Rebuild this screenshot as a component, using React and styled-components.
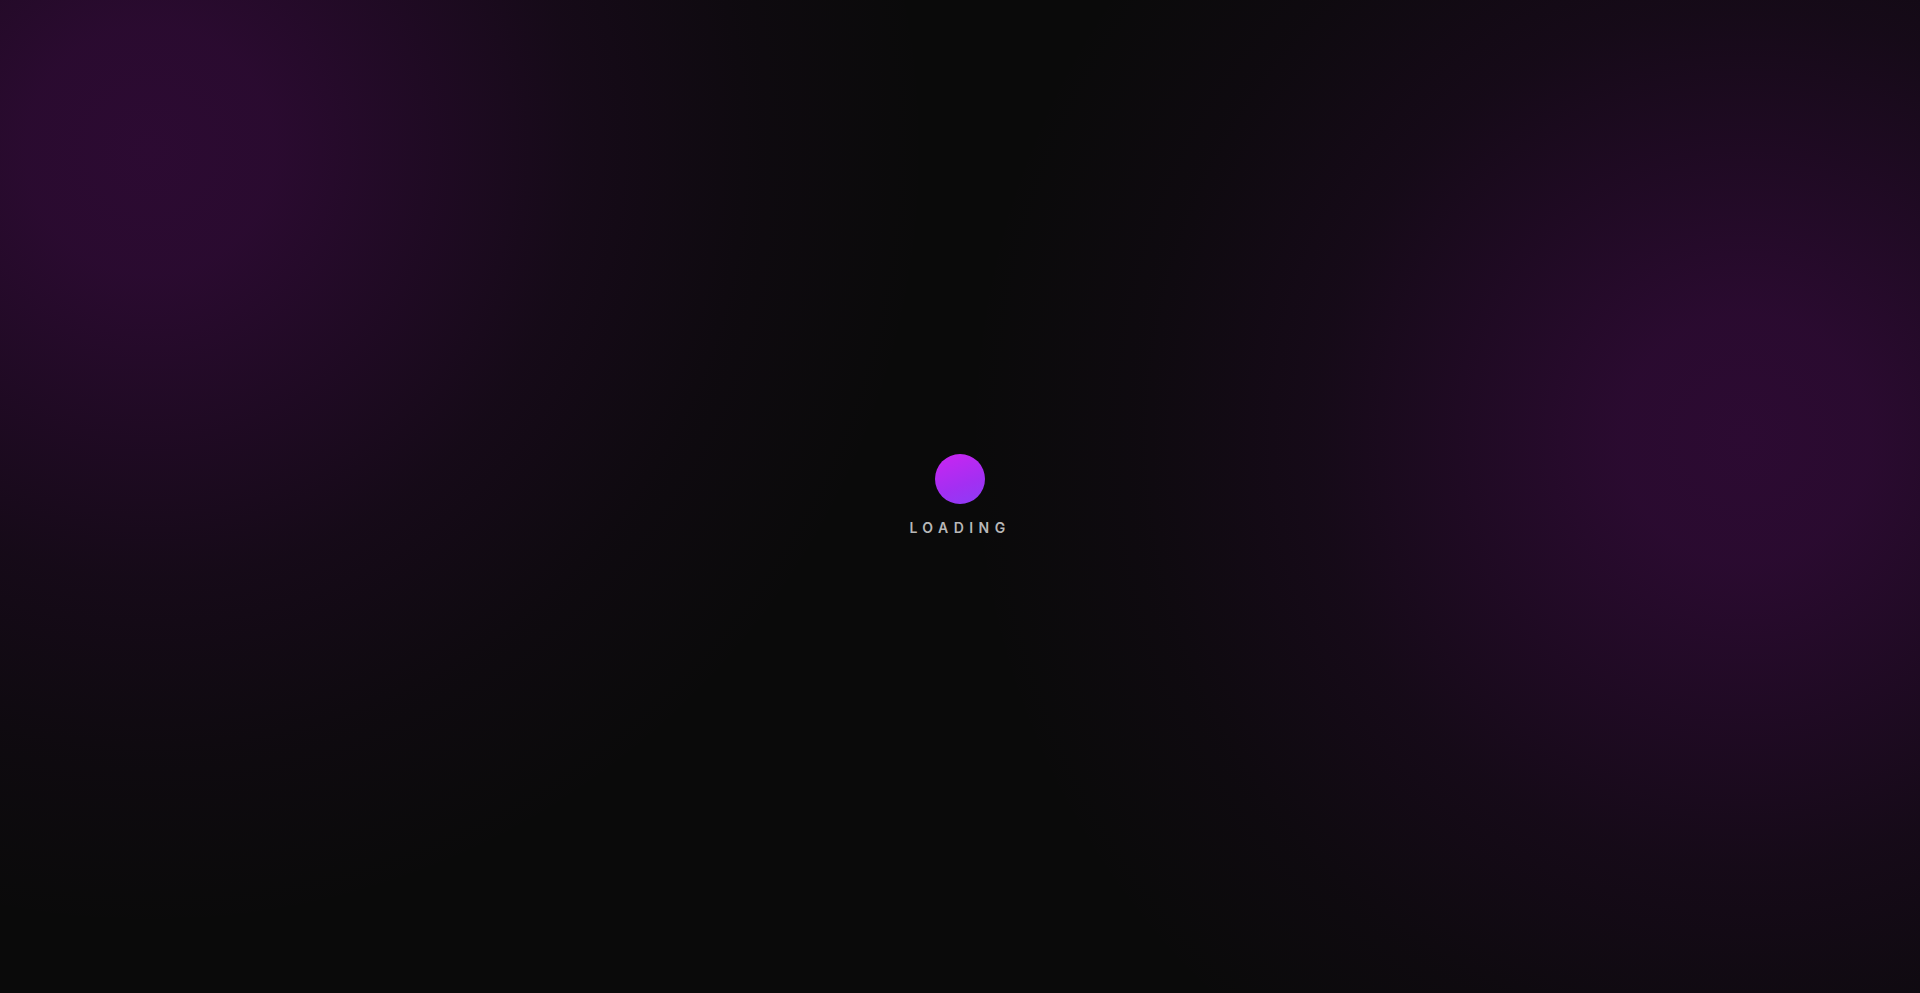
import React from "react";
import styled, { createGlobalStyle } from "styled-components";

const GlobalStyle = createGlobalStyle`
  html,
  body {
    margin: 0;
    padding: 0;
    height: 100%;
    background: #0a0a0a;
  }
  #root {
    height: 100%;
  }
  * {
    box-sizing: border-box;
  }
`;

function App() {
  return (
    <>
      <GlobalStyle />
      <StyledScreen>
        <Loader>
          <Dot />
          <Label>Loading</Label>
        </Loader>
      </StyledScreen>
    </>
  );
}

const glow = (x, y) => `radial-gradient(
  circle 780px at ${x} ${y},
  rgba(180, 12, 210, 0.2) 0%,
  rgba(180, 12, 210, 0.19) 16%,
  rgba(170, 12, 200, 0.14) 34%,
  rgba(160, 12, 190, 0.08) 55%,
  rgba(150, 12, 180, 0.03) 78%,
  rgba(10, 10, 10, 0) 100%
)`;

const StyledScreen = styled.main`
  width: 100vw;
  height: 100vh;
  display: flex;
  align-items: center;
  justify-content: center;
  background-color: #0a0a0a;
  background-image: ${glow("150px", "150px")}, ${glow("1745px", "438px")};
`;

const Loader = styled.div`
  display: flex;
  flex-direction: column;
  align-items: center;
  gap: 15px;
  margin-top: -4px;
`;

const Dot = styled.div`
  width: 50px;
  height: 50px;
  border-radius: 50%;
  background: linear-gradient(160deg, #cb25f2 0%, #a32ff2 60%, #8c3cf6 100%);
`;

const Label = styled.span`
  font-family: Inter, "Noto Sans", sans-serif;
  font-size: 14px;
  font-weight: 600;
  letter-spacing: 0.39em;
  text-transform: uppercase;
  color: #b8b8b8;
`;

export default App;
